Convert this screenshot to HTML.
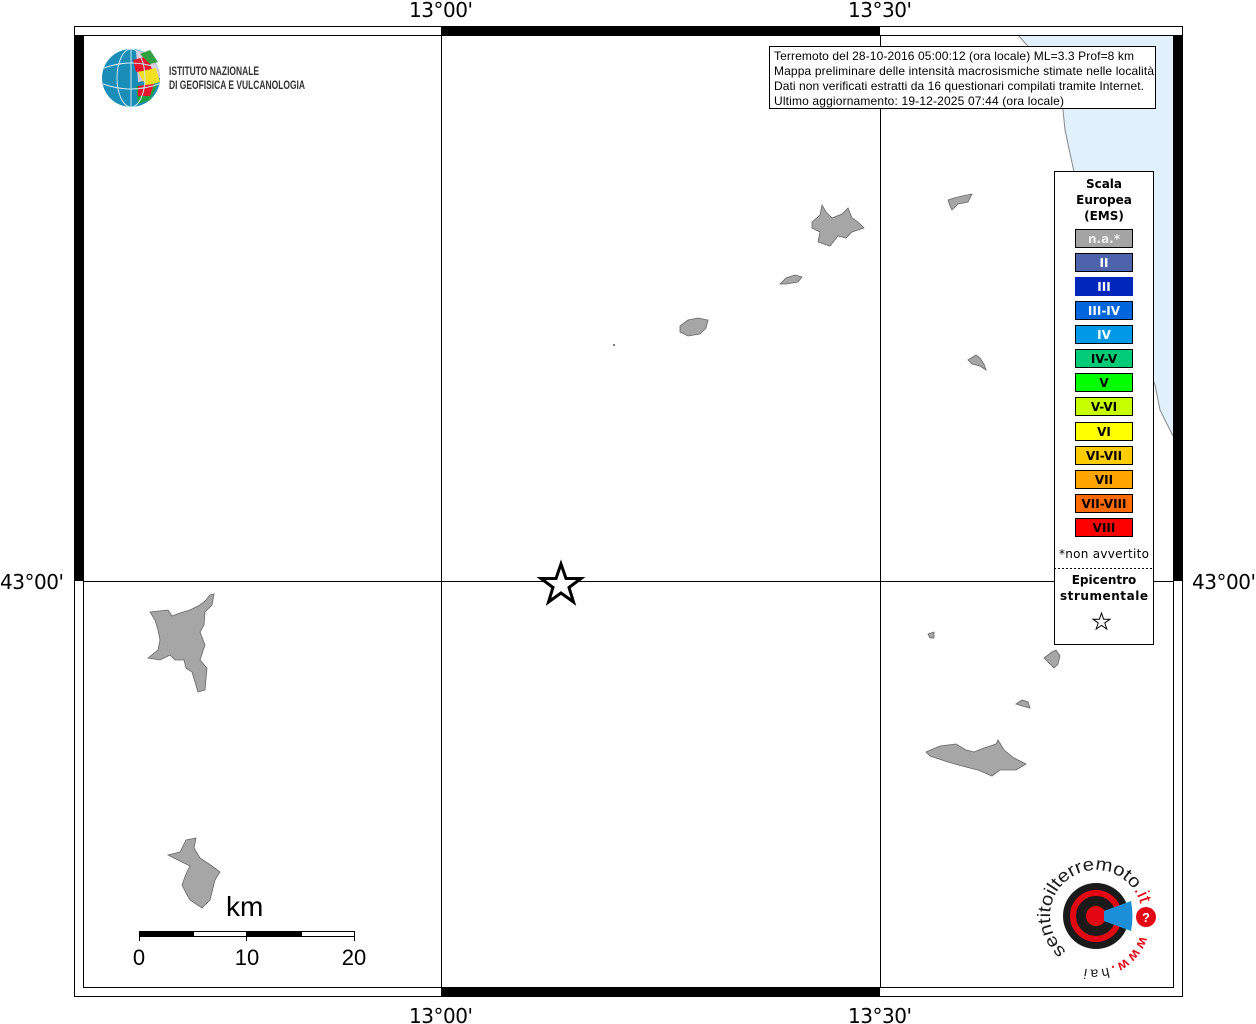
<!DOCTYPE html>
<html><head><meta charset="utf-8"><style>
html,body{margin:0;padding:0;background:#fff;}
svg{display:block;font-family:"Liberation Sans","DejaVu Sans",sans-serif;}
.dv{font-family:"DejaVu Sans","Liberation Sans",sans-serif;font-weight:bold;font-size:12px;}
</style></head><body>
<svg width="1256" height="1024" viewBox="0 0 1256 1024" xmlns="http://www.w3.org/2000/svg">
<rect width="1256" height="1024" fill="#fff"/>
<polygon points="1018,35 1173,35 1173,436 1160,410 1155,385 1120,300 1080,200 1065,130 1062,100 1040,60" fill="#e0f0fc"/>
<polyline points="1018,35 1040,60 1062,100 1065,130 1080,200 1120,300 1155,385 1160,410 1173,436" fill="none" stroke="#888" stroke-width="1"/>
<rect x="74.5" y="26.5" width="1108" height="970" fill="none" stroke="#000" stroke-width="1"/>
<rect x="83.5" y="35.5" width="1090" height="952" fill="none" stroke="#000" stroke-width="1"/>
<rect x="441" y="26" width="439" height="9" fill="#000"/>
<rect x="441" y="987" width="439" height="9" fill="#000"/>
<rect x="74" y="35" width="9" height="546" fill="#000"/>
<rect x="1173" y="35" width="9" height="546" fill="#000"/>
<line x1="441.5" y1="35" x2="441.5" y2="987" stroke="#000"/>
<line x1="880.5" y1="35" x2="880.5" y2="987" stroke="#000"/>
<line x1="83" y1="581.5" x2="1173" y2="581.5" stroke="#000"/>
<g font-size="20" fill="#000" font-family="DejaVu Sans,sans-serif">
<text x="441" y="17" text-anchor="middle" textLength="64">13°00'</text>
<text x="880" y="17" text-anchor="middle" textLength="64">13°30'</text>
<text x="441" y="1023" text-anchor="middle" textLength="64">13°00'</text>
<text x="880" y="1023" text-anchor="middle" textLength="64">13°30'</text>
<text x="0" y="589" textLength="64">43°00'</text>
<text x="1192" y="589" textLength="64">43°00'</text>
</g>
<g fill="#a6a6a6" stroke="#666" stroke-width="0.8">
<polygon points="150,612 168,610 172,616 180,613 190,610 200,605 206,600 210,595 214,594 212,605 205,612 204,625 200,632 205,645 200,660 207,668 205,690 198,692 192,672 186,668 184,660 175,660 170,655 160,660 148,658 158,650 160,640 158,630 155,620"/>
<polygon points="168,855 180,852 186,840 196,838 194,848 200,858 212,866 220,872 215,880 210,900 202,908 190,900 186,893 182,885 186,874 190,866 178,860"/>
<polygon points="812,222 820,215 822,205 826,212 832,218 842,214 848,208 852,218 858,222 864,228 852,232 846,238 838,236 830,246 818,242 820,232 812,228"/>
<polygon points="780,284 786,278 795,275 802,277 798,282 786,284"/>
<polygon points="680,326 688,320 698,318 708,320 706,328 700,334 688,336 680,332"/>
<polygon points="948,200 954,198 962,196 972,194 968,202 958,204 952,210 950,206"/>
<polygon points="968,360 976,355 980,358 984,364 986,370 980,366 972,364"/>
<polygon points="928,634 934,632 934,638 930,638"/>
<polygon points="1044,658 1052,652 1056,650 1060,656 1058,664 1054,668 1048,662"/>
<polygon points="1016,704 1022,700 1028,702 1030,708 1022,706"/>
<polygon points="926,752 940,746 956,744 966,750 974,752 984,748 996,744 998,740 1004,750 1014,758 1026,764 1016,770 1000,770 992,776 978,770 962,766 948,762 930,756"/>
</g>
<circle cx="614" cy="345" r="1" fill="#555"/>
<polygon points="561,564 566,578.5 581,578.5 569,587.5 573.5,602 561,593 548.5,602 553,587.5 541,578.5 556,578.5" fill="#fff" stroke="#000" stroke-width="3"/>
<g>
<circle cx="131" cy="78" r="29" fill="#1a8db8"/>
<path d="M136,50 A29,29 0 0 1 160,78 L138,82 Z" fill="#d8c8dc"/>
<path d="M133,60 L148,56 L152,70 L136,72 Z" fill="#e8142e"/>
<path d="M138,72 L156,68 L160,82 L146,86 Z" fill="#f0e020"/>
<path d="M136,86 L158,84 L150,100 L138,104 Z" fill="#20a040"/>
<path d="M140,54 L150,50 L158,62 L150,64 Z" fill="#30a040"/>
<path d="M138,86 L154,84 L150,96 L138,96 Z" fill="#e8142e"/>
<g fill="none" stroke="#cfe8f2" stroke-width="1">
<ellipse cx="131" cy="78" rx="14" ry="29"/>
<path d="M104,68 Q131,58 158,68"/><path d="M103,84 Q131,94 159,84"/>
<line x1="131" y1="49" x2="131" y2="107"/>
</g>
<text x="169" y="75" font-size="12" fill="#333" font-weight="bold" textLength="90" lengthAdjust="spacingAndGlyphs">ISTITUTO NAZIONALE</text>
<text x="169" y="89" font-size="12" fill="#333" font-weight="bold" textLength="136" lengthAdjust="spacingAndGlyphs">DI GEOFISICA E VULCANOLOGIA</text>
</g>
<rect x="769.5" y="46.5" width="386" height="62" fill="#fff" stroke="#000"/>
<g font-size="12" fill="#000">
<text x="774" y="60" textLength="360">Terremoto del 28-10-2016 05:00:12 (ora locale) ML=3.3 Prof=8 km</text>
<text x="774" y="75" textLength="380">Mappa preliminare delle intensità macrosismiche stimate nelle località</text>
<text x="774" y="90" textLength="370">Dati non verificati estratti da 16 questionari compilati tramite Internet.</text>
<text x="774" y="105" textLength="290">Ultimo aggiornamento: 19-12-2025 07:44 (ora locale)</text>
</g>
<rect x="1054.5" y="171.5" width="99" height="473" fill="#fff" stroke="#000"/>
<g class="dv" text-anchor="middle" fill="#000">
<text x="1104" y="188">Scala</text>
<text x="1104" y="204">Europea</text>
<text x="1104" y="220">(EMS)</text>
</g>
<g stroke="#000" stroke-width="1">
<rect x="1075.5" y="229.5" width="57" height="18" fill="#a4a4a4"/>
<rect x="1075.5" y="253.5" width="57" height="18" fill="#4f63ad"/>
<rect x="1075.5" y="277.5" width="57" height="18" fill="#0026bb" stroke="#0026bb"/>
<rect x="1075.5" y="301.5" width="57" height="18" fill="#0066dd"/>
<rect x="1075.5" y="325.5" width="57" height="18" fill="#0099e8"/>
<rect x="1075.5" y="349.5" width="57" height="18" fill="#00cc77"/>
<rect x="1075.5" y="373.5" width="57" height="18" fill="#00ff00"/>
<rect x="1075.5" y="397.5" width="57" height="18" fill="#c8ff00"/>
<rect x="1075.5" y="422.5" width="57" height="18" fill="#ffff00"/>
<rect x="1075.5" y="446.5" width="57" height="18" fill="#ffcc00"/>
<rect x="1075.5" y="470.5" width="57" height="18" fill="#ffa500"/>
<rect x="1075.5" y="494.5" width="57" height="18" fill="#ff6a00"/>
<rect x="1075.5" y="518.5" width="57" height="18" fill="#ff0000"/>
</g>
<g class="dv" text-anchor="middle">
<text x="1104" y="243" fill="#eee">n.a.*</text>
<text x="1104" y="267" fill="#fff">II</text>
<text x="1104" y="291" fill="#fff">III</text>
<text x="1104" y="315" fill="#fff">III-IV</text>
<text x="1104" y="339" fill="#fff">IV</text>
<text x="1104" y="363" fill="#000">IV-V</text>
<text x="1104" y="387" fill="#000">V</text>
<text x="1104" y="411" fill="#000">V-VI</text>
<text x="1104" y="436" fill="#000">VI</text>
<text x="1104" y="460" fill="#000">VI-VII</text>
<text x="1104" y="484" fill="#000">VII</text>
<text x="1104" y="508" fill="#000">VII-VIII</text>
<text x="1104" y="532" fill="#000">VIII</text>
</g>
<text x="1104" y="558" text-anchor="middle" font-size="12" font-family="DejaVu Sans,sans-serif" textLength="90">*non avvertito</text>
<line x1="1054" y1="568.5" x2="1153" y2="568.5" stroke="#000" stroke-dasharray="2,2"/>
<g class="dv" text-anchor="middle"><text x="1104" y="584">Epicentro</text><text x="1104" y="600" textLength="88">strumentale</text></g>
<polygon points="1101.5,613 1103.6,619.2 1110,619.2 1104.8,623 1106.8,629 1101.5,625.3 1096.2,629 1098.2,623 1093,619.2 1099.4,619.2" fill="#fff" stroke="#000" stroke-width="1"/>
<text x="226" y="916" font-size="28">km</text>
<rect x="139" y="931" width="54" height="6" fill="#000"/>
<rect x="193.5" y="931.5" width="53" height="5" fill="#fff" stroke="#000"/>
<rect x="247" y="931" width="54" height="6" fill="#000"/>
<rect x="301.5" y="931.5" width="53" height="5" fill="#fff" stroke="#000"/>
<g stroke="#000"><line x1="139.5" y1="931" x2="139.5" y2="941"/><line x1="246.5" y1="931" x2="246.5" y2="941"/><line x1="354.5" y1="931" x2="354.5" y2="941"/></g>
<g font-size="22" text-anchor="middle"><text x="139" y="965">0</text><text x="247" y="965">10</text><text x="354" y="965">20</text></g>
<g>
<circle cx="1096" cy="916" r="33" fill="#1a1a1a"/>
<circle cx="1096" cy="916" r="23" fill="none" stroke="#e30613" stroke-width="6"/>
<circle cx="1096" cy="916" r="10" fill="#e30613"/>
<path d="M1104,911 L1131,901 Q1134,916 1131,931 L1104,921 Z" fill="#1b8fd8"/>
<circle cx="1146" cy="917" r="10" fill="#e30613"/>
<text x="1146" y="922" font-size="13" fill="#fff" text-anchor="middle" font-weight="bold">?</text>
<path id="arc" d="M1066.4,951.2 A46,46 0 1 1 1141.3,908" fill="none"/>
<text font-size="18" fill="#1a1a1a"><textPath href="#arc" textLength="172" lengthAdjust="spacingAndGlyphs">sentitoilterremoto<tspan fill="#e30613">.it</tspan></textPath></text>
<path id="arc2" d="M1140,936 A48,48 0 0 1 1072,964" fill="none"/>
<text font-size="14" font-weight="bold" fill="#e30613"><textPath href="#arc2" textLength="70">www.<tspan fill="#1a1a1a" font-weight="normal">hai</tspan></textPath></text>
</g>
</svg>
</body></html>
